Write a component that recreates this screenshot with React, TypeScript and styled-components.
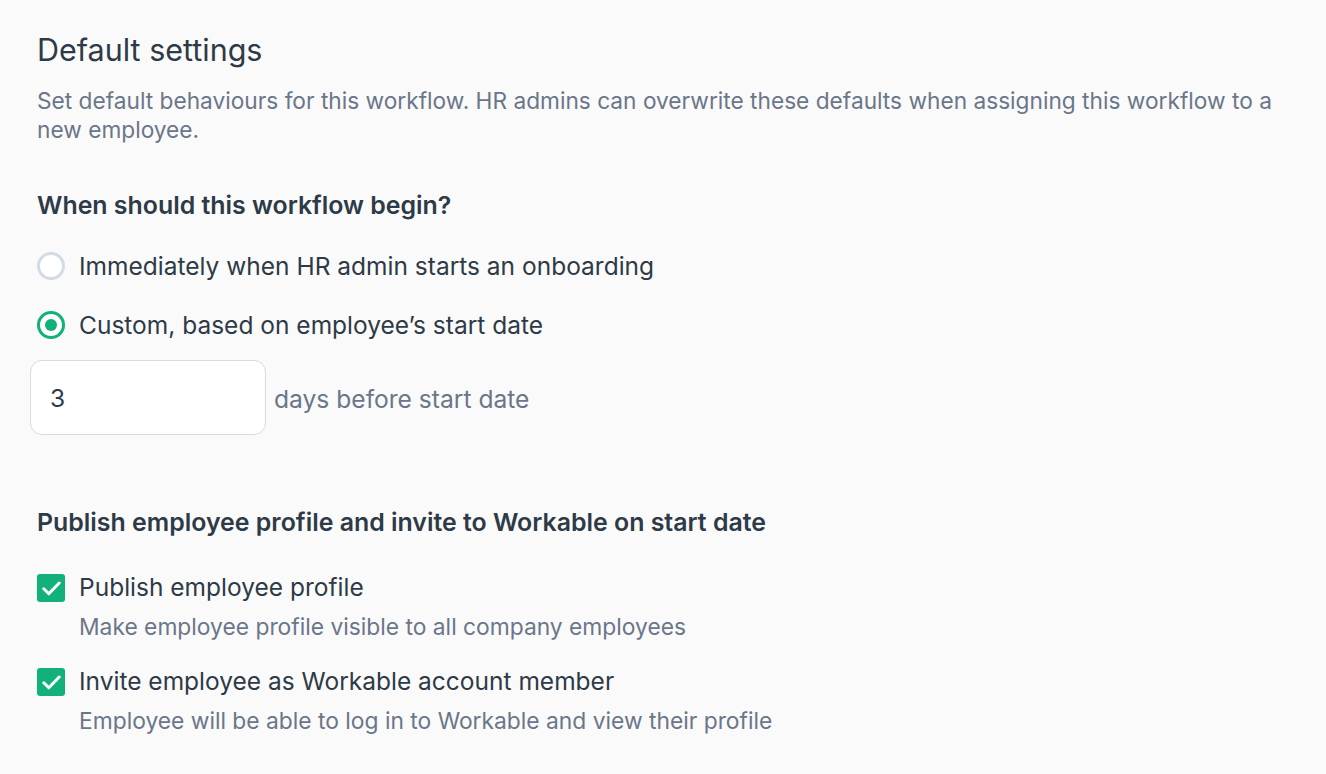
import React, { useState } from 'react'
import styled, { createGlobalStyle } from 'styled-components'

const GlobalStyle = createGlobalStyle`
  html, body {
    margin: 0;
    padding: 0;
    background: #fafafa;
  }
  body {
    font-family: Inter, "Noto Sans", sans-serif;
    color: #2e3a47;
    -webkit-font-smoothing: antialiased;
  }
`

const colors = {
  text: '#2e3a47',
  muted: '#6a7689',
  green: '#12b179',
  border: '#d3dbe6',
}

const Page = styled.div`
  padding: 30px 37px;
  max-width: 1260px;
`

const Title = styled.h1`
  margin: 0;
  font-size: 30.5px;
  font-weight: 400;
  line-height: 40px;
  color: ${colors.text};
`

const Description = styled.p`
  margin: 16px 0 0;
  font-size: 22.7px;
  line-height: 29px;
  color: ${colors.muted};
`

const Section = styled.section<{ $top: number }>`
  margin-top: ${({ $top }) => $top}px;
  display: flex;
  flex-direction: column;
`

const SectionTitle = styled.h2`
  margin: 0;
  font-size: 24.9px;
  font-weight: 600;
  line-height: 32px;
  color: ${colors.text};
`

const OptionList = styled.div<{ $gap: number; $top: number }>`
  margin-top: ${({ $top }) => $top}px;
  display: flex;
  flex-direction: column;
  gap: ${({ $gap }) => $gap}px;
`

const OptionRow = styled.label`
  display: flex;
  align-items: flex-start;
  gap: 14px;
  cursor: pointer;
`

const RadioCircle = styled.span<{ $checked: boolean }>`
  flex: none;
  box-sizing: border-box;
  width: 28px;
  height: 28px;
  margin-top: 3px;
  border-radius: 50%;
  border: ${({ $checked }) => ($checked ? `3px solid ${colors.green}` : `3px solid ${colors.border}`)};
  background: #fff;
  display: flex;
  align-items: center;
  justify-content: center;

  &::after {
    content: '';
    width: 12px;
    height: 12px;
    border-radius: 50%;
    background: ${colors.green};
    display: ${({ $checked }) => ($checked ? 'block' : 'none')};
  }
`

const CheckBox = styled.span`
  flex: none;
  width: 28px;
  height: 28px;
  margin-top: 4px;
  border-radius: 3px;
  background: ${colors.green};
  display: flex;
  align-items: center;
  justify-content: center;
`

const OptionText = styled.div`
  display: flex;
  flex-direction: column;
`

const OptionLabel = styled.span`
  font-size: 24.5px;
  line-height: 34px;
  color: ${colors.text};
`

const OptionHint = styled.span`
  margin-top: 8px;
  font-size: 22.8px;
  line-height: 30px;
  color: ${colors.muted};
`

const DaysRow = styled.div`
  margin: 18px 0 0 -7px;
  display: flex;
  align-items: center;
  gap: 8px;
`

const DaysInput = styled.input`
  box-sizing: border-box;
  width: 236px;
  height: 75px;
  padding: 0 19px;
  border: 1px solid ${colors.border};
  border-radius: 12px;
  background: #fff;
  font-family: inherit;
  font-size: 24.5px;
  color: ${colors.text};
  outline: none;
`

const DaysText = styled.span`
  margin-top: 2px;
  font-size: 24.6px;
  color: ${colors.muted};
`

const Check = () => (
  <svg width="19" height="15" viewBox="0 0 19 15" fill="none">
    <path d="M1.8 7.8 L6.8 12.8 L17.2 2" stroke="#fff" strokeWidth="3" strokeLinecap="round" strokeLinejoin="round" />
  </svg>
)

const App = () => {
  const [start, setStart] = useState<'now' | 'custom'>('custom')
  const [days, setDays] = useState('3')

  return (
    <>
      <GlobalStyle />
      <Page>
        <Title>Default settings</Title>
        <Description>
          Set default behaviours for this workflow. HR admins can overwrite these defaults when assigning this workflow to a
          new employee.
        </Description>

        <Section $top={45}>
          <SectionTitle>When should this workflow begin?</SectionTitle>
          <OptionList $gap={25} $top={28}>
            <OptionRow onClick={() => setStart('now')}>
              <RadioCircle $checked={start === 'now'} />
              <OptionLabel>Immediately when HR admin starts an onboarding</OptionLabel>
            </OptionRow>
            <OptionRow onClick={() => setStart('custom')}>
              <RadioCircle $checked={start === 'custom'} />
              <OptionLabel>Custom, based on employee’s start date</OptionLabel>
            </OptionRow>
          </OptionList>
          <DaysRow>
            <DaysInput value={days} onChange={(e) => setDays(e.target.value)} />
            <DaysText>days before start date</DaysText>
          </DaysRow>
        </Section>

        <Section $top={71}>
          <SectionTitle>Publish employee profile and invite to Workable on start date</SectionTitle>
          <OptionList $gap={22} $top={32}>
            <OptionRow>
              <CheckBox>
                <Check />
              </CheckBox>
              <OptionText>
                <OptionLabel>Publish employee profile</OptionLabel>
                <OptionHint>Make employee profile visible to all company employees</OptionHint>
              </OptionText>
            </OptionRow>
            <OptionRow>
              <CheckBox>
                <Check />
              </CheckBox>
              <OptionText>
                <OptionLabel>Invite employee as Workable account member</OptionLabel>
                <OptionHint>Employee will be able to log in to Workable and view their profile</OptionHint>
              </OptionText>
            </OptionRow>
          </OptionList>
        </Section>
      </Page>
    </>
  )
}

export default App
